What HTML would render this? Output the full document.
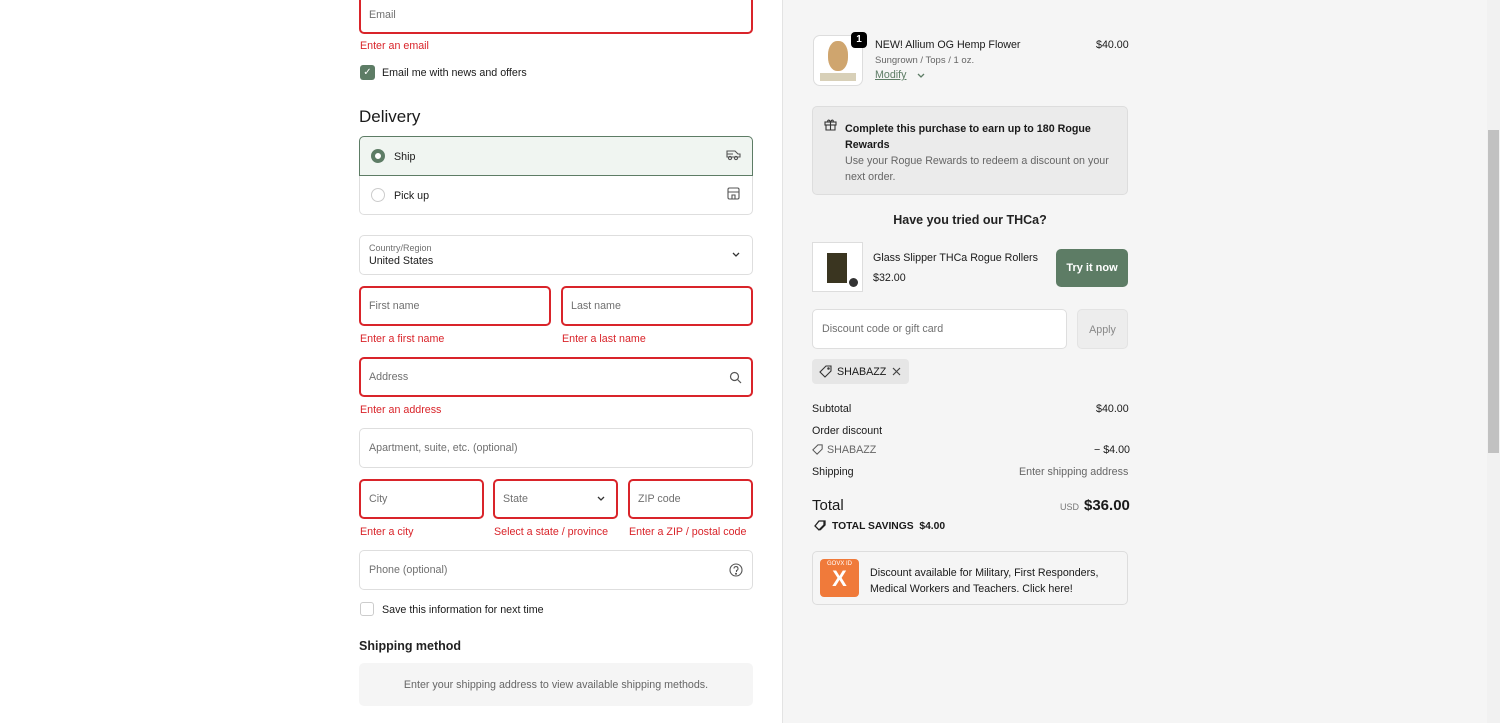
<!DOCTYPE html>
<html><head><meta charset="utf-8"><style>
*{box-sizing:border-box;margin:0;padding:0}
body{width:1500px;height:723px;overflow:hidden;background:#fff;font-family:"Liberation Sans",sans-serif;color:#1a1a1a;position:relative;font-size:10.7px}
.a{position:absolute}
.inp{position:absolute;border:1px solid #dedede;border-radius:5px;background:#fff;color:#707070;font-size:10.7px;padding-left:9px;display:flex;align-items:center}
.err{border:2px solid #d9242a;padding-left:8px}
.em{position:absolute;color:#d9242a;font-size:10.7px}
.right{position:absolute;left:782px;top:0;width:705px;height:723px;background:#f5f5f5;border-left:1px solid #e3e3e3}
.r{position:absolute;font-size:10.7px}
</style></head><body>
<div class="inp err" style="left:359px;top:-8px;width:394px;height:42px;padding-top:4px">Email</div>
<div class="em" style="left:360px;top:40px">Enter an email</div>
<div class="a" style="left:360px;top:65px;width:15px;height:15px;background:#5d7c65;border-radius:3px;color:#fff;font-size:10px;text-align:center;line-height:15px">✓</div>
<div class="a" style="left:382px;top:67px">Email me with news and offers</div>
<div class="a" style="left:359px;top:107px;font-size:17px">Delivery</div>
<div class="a" style="left:359px;top:136px;width:394px;height:79px;border:1px solid #dedede;border-radius:5px"></div>
<div class="a" style="left:359px;top:136px;width:394px;height:40px;border:1px solid #5d7c65;border-radius:5px 5px 0 0;background:#f0f5f1"></div>
<div class="a" style="left:371px;top:149px;width:14px;height:14px;border-radius:50%;border:4px solid #5d7c65;background:#fff"></div>
<div class="a" style="left:394px;top:151px">Ship</div>
<svg class="a" style="left:726px;top:148px" width="15" height="13" viewBox="0 0 15 13" fill="none" stroke="#555" stroke-width="1.1"><path d="M1 3h8l3 3h2v3H1z M1 6h6"/><circle cx="4" cy="10" r="1.6"/><circle cx="10" cy="10" r="1.6"/></svg>
<div class="a" style="left:371px;top:188px;width:14px;height:14px;border-radius:50%;border:1px solid #ccc;background:#fff"></div>
<div class="a" style="left:394px;top:190px">Pick up</div>
<svg class="a" style="left:727px;top:187px" width="13" height="13" viewBox="0 0 13 13" fill="none" stroke="#555" stroke-width="1.1"><rect x="1" y="1" width="11" height="11" rx="1.5"/><path d="M1 5h11 M5 12V8h3v4"/></svg>
<div class="inp" style="left:359px;top:235px;width:394px;height:40px;display:block;padding-top:7px"><div style="font-size:9px;color:#707070">Country/Region</div><div style="color:#1a1a1a;font-size:10.7px;margin-top:2px">United States</div></div>
<svg class="a" style="left:731px;top:251px" width="10" height="7" viewBox="0 0 10 7" fill="none" stroke="#333" stroke-width="1.3"><path d="M2 2l3 3 3-3"/></svg>
<div class="inp err" style="left:359px;top:286px;width:192px;height:40px">First name</div>
<div class="inp err" style="left:561px;top:286px;width:192px;height:40px">Last name</div>
<div class="em" style="left:360px;top:333px">Enter a first name</div>
<div class="em" style="left:562px;top:333px">Enter a last name</div>
<div class="inp err" style="left:359px;top:357px;width:394px;height:40px">Address</div>
<svg class="a" style="left:729px;top:371px" width="13" height="13" viewBox="0 0 13 13" fill="none" stroke="#555" stroke-width="1.2"><circle cx="5.5" cy="5.5" r="4"/><path d="M8.5 8.5l3.5 3.5"/></svg>
<div class="em" style="left:360px;top:404px">Enter an address</div>
<div class="inp" style="left:359px;top:428px;width:394px;height:40px">Apartment, suite, etc. (optional)</div>
<div class="inp err" style="left:359px;top:479px;width:125px;height:40px">City</div>
<div class="inp err" style="left:493px;top:479px;width:125px;height:40px">State</div>
<svg class="a" style="left:596px;top:495px" width="10" height="7" viewBox="0 0 10 7" fill="none" stroke="#333" stroke-width="1.3"><path d="M2 2l3 3 3-3"/></svg>
<div class="inp err" style="left:628px;top:479px;width:125px;height:40px">ZIP code</div>
<div class="em" style="left:360px;top:526px">Enter a city</div>
<div class="em" style="left:494px;top:526px">Select a state / province</div>
<div class="em" style="left:629px;top:526px">Enter a ZIP / postal code</div>
<div class="inp" style="left:359px;top:550px;width:394px;height:40px">Phone (optional)</div>
<svg class="a" style="left:729px;top:563px" width="14" height="14" viewBox="0 0 14 14" fill="none" stroke="#555" stroke-width="1.1"><circle cx="7" cy="7" r="6"/><path d="M5 5.5a2 2 0 1 1 2.5 2V9"/><circle cx="7" cy="10.8" r=".5" fill="#555"/></svg>
<div class="a" style="left:360px;top:602px;width:14px;height:14px;border:1px solid #ccc;border-radius:3px"></div>
<div class="a" style="left:382px;top:604px">Save this information for next time</div>
<div class="a" style="left:359px;top:639px;font-size:12.5px;font-weight:bold;color:#222">Shipping method</div>
<div class="a" style="left:359px;top:663px;width:394px;height:43px;background:#f5f5f5;border-radius:5px;color:#666;text-align:center;line-height:45px">Enter your shipping address to view available shipping methods.</div>
<div class="right"></div>
<div class="a" style="left:813px;top:35px;width:50px;height:51px;border:1px solid #ddd;border-radius:7px;background:#fff;overflow:hidden">
<div style="position:absolute;left:14px;top:5px;width:20px;height:30px;border-radius:45%;background:#cfa56e"></div>
<div style="position:absolute;left:6px;top:37px;width:36px;height:8px;background:#d8d0b8"></div></div>
<div class="a" style="left:851px;top:32px;width:16px;height:16px;background:#000;color:#fff;border-radius:4px;font-size:10px;font-weight:bold;text-align:center;line-height:16px">1</div>
<div class="r" style="left:875px;top:39px">NEW! Allium OG Hemp Flower</div>
<div class="r" style="left:875px;top:55px;font-size:9.5px;color:#666">Sungrown / Tops / 1 oz.</div>
<div class="r" style="left:875px;top:69px;color:#5d7c65;text-decoration:underline">Modify</div>
<svg class="a" style="left:916px;top:72px" width="10" height="7" viewBox="0 0 10 7" fill="none" stroke="#5d7c65" stroke-width="1.3"><path d="M2 2l3 3 3-3"/></svg>
<div class="r" style="left:1096px;top:39px">$40.00</div>
<div class="a" style="left:812px;top:106px;width:316px;height:89px;background:#ebebeb;border:1px solid #ddd;border-radius:5px"></div>
<svg class="a" style="left:824px;top:118px" width="13" height="13" viewBox="0 0 13 13" fill="none" stroke="#333" stroke-width="1.1"><rect x="1" y="4" width="11" height="3"/><path d="M2 7v5h9V7 M6.5 4v8 M6.5 4C5 1 3 2 4 4 M6.5 4C8 1 10 2 9 4"/></svg>
<div class="r" style="left:845px;top:121px;font-weight:bold;line-height:16px;width:270px">Complete this purchase to earn up to 180 Rogue Rewards</div>
<div class="r" style="left:845px;top:153px;color:#666;line-height:16px;width:280px">Use your Rogue Rewards to redeem a discount on your next order.</div>
<div class="r" style="left:812px;width:316px;top:213px;text-align:center;font-size:12.5px;font-weight:bold;color:#222">Have you tried our THCa?</div>
<div class="a" style="left:812px;top:242px;width:51px;height:50px;border:1px solid #ddd;background:#fff">
<div style="position:absolute;left:14px;top:10px;width:20px;height:30px;background:#3a3520"></div>
<div style="position:absolute;left:36px;top:35px;width:9px;height:9px;border-radius:50%;background:#333"></div></div>
<div class="r" style="left:873px;top:252px">Glass Slipper THCa Rogue Rollers</div>
<div class="r" style="left:873px;top:272px">$32.00</div>
<div class="a" style="left:1056px;top:249px;width:72px;height:38px;background:#5d7c65;border-radius:5px;color:#fff;font-weight:bold;text-align:center;line-height:38px;font-size:11px">Try it now</div>
<div class="inp" style="left:812px;top:309px;width:255px;height:40px">Discount code or gift card</div>
<div class="a" style="left:1077px;top:309px;width:51px;height:40px;background:#ededed;border:1px solid #e3e3e3;border-radius:5px;color:#888;text-align:center;line-height:40px">Apply</div>
<div class="a" style="left:812px;top:359px;width:97px;height:25px;background:#e6e6e6;border-radius:4px"></div>
<svg class="a" style="left:819px;top:365px" width="13" height="13" viewBox="0 0 13 13" fill="none" stroke="#333" stroke-width="1.1"><path d="M7 1h5v5l-6 6-5-5z"/><circle cx="9.5" cy="3.5" r=".7"/></svg>
<div class="r" style="left:837px;top:366px">SHABAZZ</div>
<svg class="a" style="left:892px;top:367px" width="9" height="9" viewBox="0 0 9 9" stroke="#444" stroke-width="1.2"><path d="M1 1l7 7M8 1L1 8"/></svg>
<div class="r" style="left:812px;top:403px">Subtotal</div><div class="r" style="left:1096px;top:403px">$40.00</div>
<div class="r" style="left:812px;top:425px">Order discount</div>
<svg class="a" style="left:812px;top:444px" width="11" height="11" viewBox="0 0 13 13" fill="none" stroke="#555" stroke-width="1.2"><path d="M7 1h5v5l-6 6-5-5z"/></svg>
<div class="r" style="left:827px;top:444px;color:#666">SHABAZZ</div><div class="r" style="left:1094px;top:444px">− $4.00</div>
<div class="r" style="left:812px;top:466px">Shipping</div><div class="r" style="left:1019px;top:466px;color:#666">Enter shipping address</div>
<div class="r" style="left:812px;top:497px;font-size:15px">Total</div>
<div class="r" style="left:1060px;top:502px;font-size:9px;color:#777">USD</div>
<div class="r" style="left:1084px;top:497px;font-size:15px;font-weight:bold">$36.00</div>
<svg class="a" style="left:813px;top:520px" width="13" height="12" viewBox="0 0 13 12" fill="none" stroke="#222" stroke-width="1.3"><path d="M6 1h5v4l-5 5-4-4z M8 1h4v4l-5 5"/></svg>
<div class="r" style="left:832px;top:521px;font-weight:bold;font-size:10.3px">TOTAL SAVINGS&nbsp; $4.00</div>
<div class="a" style="left:812px;top:551px;width:316px;height:54px;background:#f5f5f5;border:1px solid #ddd;border-radius:5px"></div>
<div class="a" style="left:820px;top:559px;width:39px;height:38px;background:#f07a3a;border-radius:4px;color:#fff;text-align:center">
<div style="font-size:6px;margin-top:2px">GOVX ID</div><div style="font-size:22px;font-weight:bold;line-height:24px">X</div></div>
<div class="r" style="left:870px;top:565px;line-height:16px;width:250px">Discount available for Military, First Responders, Medical Workers and Teachers. Click here!</div>
<div class="a" style="left:1487px;top:0;width:13px;height:723px;background:#f1f1f1"></div>
<div class="a" style="left:1488px;top:130px;width:11px;height:323px;background:#c1c1c1"></div>
</body></html>
